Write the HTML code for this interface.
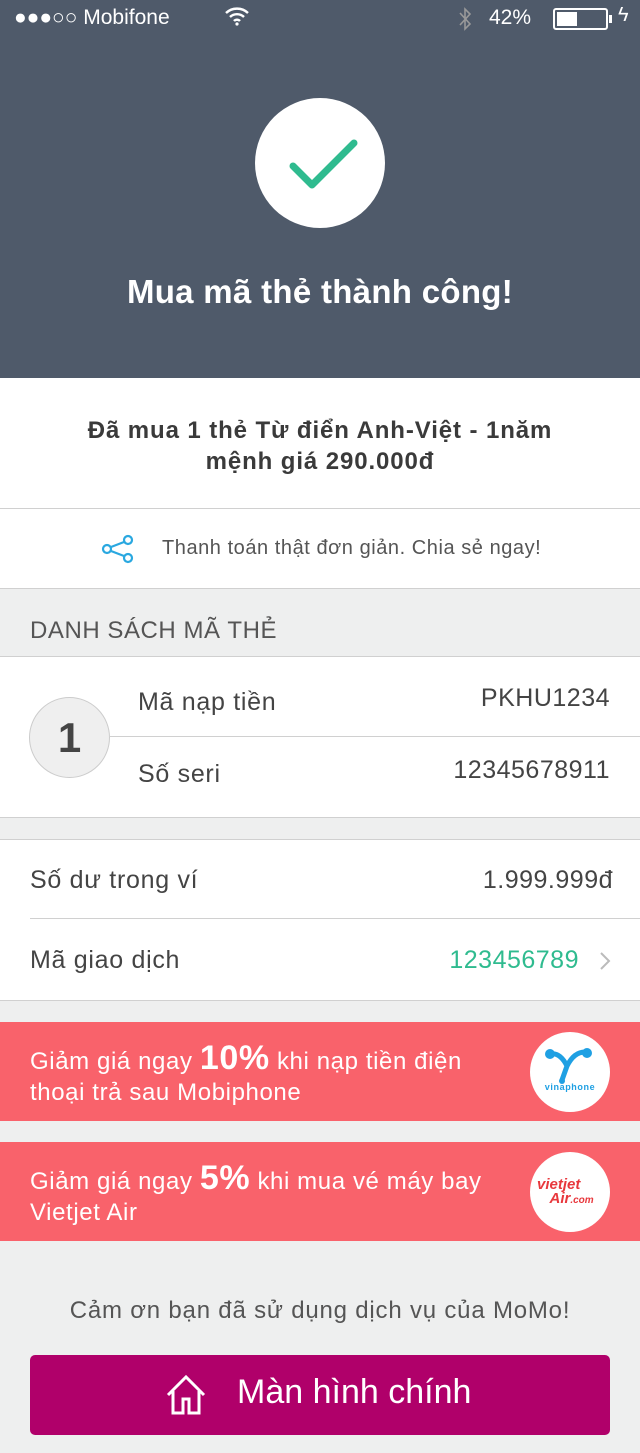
<!DOCTYPE html>
<html><head><meta charset="utf-8"><style>
*{margin:0;padding:0;box-sizing:border-box}
body{width:640px;height:1453px;background:#eeefef;font-family:"Liberation Sans",sans-serif;position:relative;overflow:hidden;color:#444}
.a{position:absolute}
.hdr{left:0;top:0;width:640px;height:378px;background:#4f5a6a}
.w{background:#fff;left:0;width:640px}
.line{position:absolute;height:1px;background:#d0d0d0}
.red{left:0;width:640px;height:99px;background:#f9626b;color:#fff;font-size:24px;letter-spacing:0.6px}
.r{font-size:25px;letter-spacing:0.7px}
</style></head><body>
<div class="a hdr">
 <div class="a" style="left:14px;top:6px;color:#fff;font-size:21px">●●●○○ Mobifone</div>
 <svg class="a" style="left:224px;top:6px" width="26" height="20" viewBox="0 0 26 20"><path d="M2 7a16 16 0 0 1 22 0M6 11a10 10 0 0 1 14 0M10 15a4 4 0 0 1 6 0" stroke="#fff" stroke-width="2.4" fill="none"/><circle cx="13" cy="18" r="1.6" fill="#fff"/></svg>
 <svg class="a" style="left:457px;top:6px" width="16" height="26" viewBox="0 0 16 26"><path d="M3 7l10 11-5 5V3l5 5L3 19" stroke="#999" stroke-width="1.6" fill="none"/></svg>
 <div class="a" style="left:489px;top:6px;color:#fff;font-size:21px">42%</div>
 <div class="a" style="left:553px;top:8px;width:55px;height:22px;border:2px solid #fff;border-radius:3px"><div style="margin:2px;width:20px;height:14px;background:#fff"></div></div>
 <div class="a" style="left:609px;top:15px;width:3px;height:8px;background:#fff"></div>
 <div class="a" style="left:618px;top:4px;color:#fff;font-size:20px">ϟ</div>
 <div class="a" style="left:255px;top:98px;width:130px;height:130px;border-radius:50%;background:#fff"></div>
 <svg class="a" style="left:288px;top:138px" width="70" height="54" viewBox="0 0 70 54"><path d="M5 28l19 19L66 5" stroke="#2fbb8f" stroke-width="7" fill="none" stroke-linecap="round" stroke-linejoin="round"/></svg>
 <div class="a" style="left:0;width:640px;top:273px;text-align:center;color:#fff;font-size:33px;letter-spacing:0.3px;font-weight:bold">Mua mã thẻ thành công!</div>
</div>
<div class="a w" style="top:378px;height:130px;text-align:center;font-weight:bold;font-size:24px;letter-spacing:0.9px;color:#3a3a3a;padding-top:37px;line-height:31px">Đã mua 1 thẻ Từ điển Anh-Việt - 1năm<br>mệnh giá 290.000đ</div>
<div class="line" style="top:508px;left:0;width:640px"></div>
<div class="a w" style="top:509px;height:79px"></div>
<svg class="a" style="left:101px;top:534px" width="34" height="30" viewBox="0 0 34 30"><g stroke="#2aa8e0" stroke-width="2.2" fill="none"><circle cx="6" cy="15" r="4"/><circle cx="27" cy="6" r="4"/><circle cx="27" cy="24" r="4"/><path d="M10 13l13-5M10 17l13 5"/></g></svg>
<div class="a" style="left:162px;top:537px;font-size:20px;letter-spacing:0.55px;color:#555">Thanh toán thật đơn giản. Chia sẻ ngay!</div>
<div class="line" style="top:588px;left:0;width:640px"></div>
<div class="a" style="left:30px;top:617px;font-size:24px;letter-spacing:0.55px;color:#555">DANH SÁCH MÃ THẺ</div>
<div class="line" style="top:656px;left:0;width:640px"></div>
<div class="a w" style="top:657px;height:160px"></div>
<div class="a" style="left:29px;top:697px;width:81px;height:81px;border-radius:50%;background:#efefef;border:1px solid #ccc;text-align:center;line-height:80px;font-size:42px;font-weight:bold;color:#444">1</div>
<div class="line" style="top:736px;left:110px;width:530px"></div>
<div class="a r" style="left:138px;top:688px">Mã nạp tiền</div>
<div class="a r" style="right:30px;top:684px;letter-spacing:0.5px">PKHU1234</div>
<div class="a r" style="left:138px;top:760px">Số seri</div>
<div class="a r" style="right:30px;top:756px;letter-spacing:0.5px">12345678911</div>
<div class="line" style="top:817px;left:0;width:640px"></div>
<div class="line" style="top:839px;left:0;width:640px"></div>
<div class="a w" style="top:840px;height:160px"></div>
<div class="a r" style="left:30px;top:866px">Số dư trong ví</div>
<div class="a r" style="right:27px;top:866px;letter-spacing:0.5px">1.999.999đ</div>
<div class="line" style="top:918px;left:30px;width:610px"></div>
<div class="a r" style="left:30px;top:946px">Mã giao dịch</div>
<div class="a r" style="right:61px;top:946px;color:#2fbb8f;letter-spacing:0.5px">123456789</div>
<svg class="a" style="left:599px;top:951px" width="12" height="20" viewBox="0 0 12 20"><path d="M2 2l8 8-8 8" stroke="#bbb" stroke-width="2" fill="none"/></svg>
<div class="line" style="top:1000px;left:0;width:640px"></div>
<div class="a red" style="top:1022px">
 <div class="a" style="left:30px;top:21px;line-height:31px">Giảm giá ngay <b style="font-size:34px">10%</b> khi nạp tiền điện<br>thoại trả sau Mobiphone</div>
 <div class="a" style="left:530px;top:10px;width:80px;height:80px;border-radius:50%;background:#fff"></div>
 <svg class="a" style="left:540px;top:22px" width="60" height="48" viewBox="0 0 60 48"><path d="M10 10Q20 8 27 22Q34 8 45 8M27 22L22 36" stroke="#1fa0e3" stroke-width="5" fill="none" stroke-linecap="round"/><circle cx="10" cy="10" r="5" fill="#1fa0e3"/><circle cx="47" cy="9" r="5" fill="#1fa0e3"/><circle cx="22" cy="37" r="3" fill="#1fa0e3"/><text x="30" y="46" font-size="9" fill="#1fa0e3" text-anchor="middle" font-family="Liberation Sans" font-weight="bold">vinaphone</text></svg>
</div>
<div class="a red" style="top:1142px">
 <div class="a" style="left:30px;top:21px;line-height:31px">Giảm giá ngay <b style="font-size:34px">5%</b> khi mua vé máy bay<br>Vietjet Air</div>
 <div class="a" style="left:530px;top:10px;width:80px;height:80px;border-radius:50%;background:#fff"></div>
 <div class="a" style="left:537px;top:36px;color:#e8383d;font-size:15px;font-weight:bold;font-style:italic;line-height:14px;letter-spacing:0">vietjet<br>&nbsp;&nbsp;&nbsp;Air<span style="font-size:10px">.com</span></div>
</div>
<div class="a" style="left:0;width:640px;top:1297px;text-align:center;font-size:24px;letter-spacing:0.8px;color:#555">Cảm ơn bạn đã sử dụng dịch vụ của MoMo!</div>
<div class="a" style="left:30px;top:1355px;width:580px;height:80px;background:#b0006a;border-radius:5px"></div>
<svg class="a" style="left:166px;top:1374px" width="40" height="42" viewBox="0 0 40 42"><path d="M2 21L20 3l18 18M7 17v22h10V25h6v14h10V17" stroke="#fff" stroke-width="3" fill="none"/></svg>
<div class="a" style="left:237px;top:1373px;font-size:34px;color:#fff">Màn hình chính</div>
</body></html>
